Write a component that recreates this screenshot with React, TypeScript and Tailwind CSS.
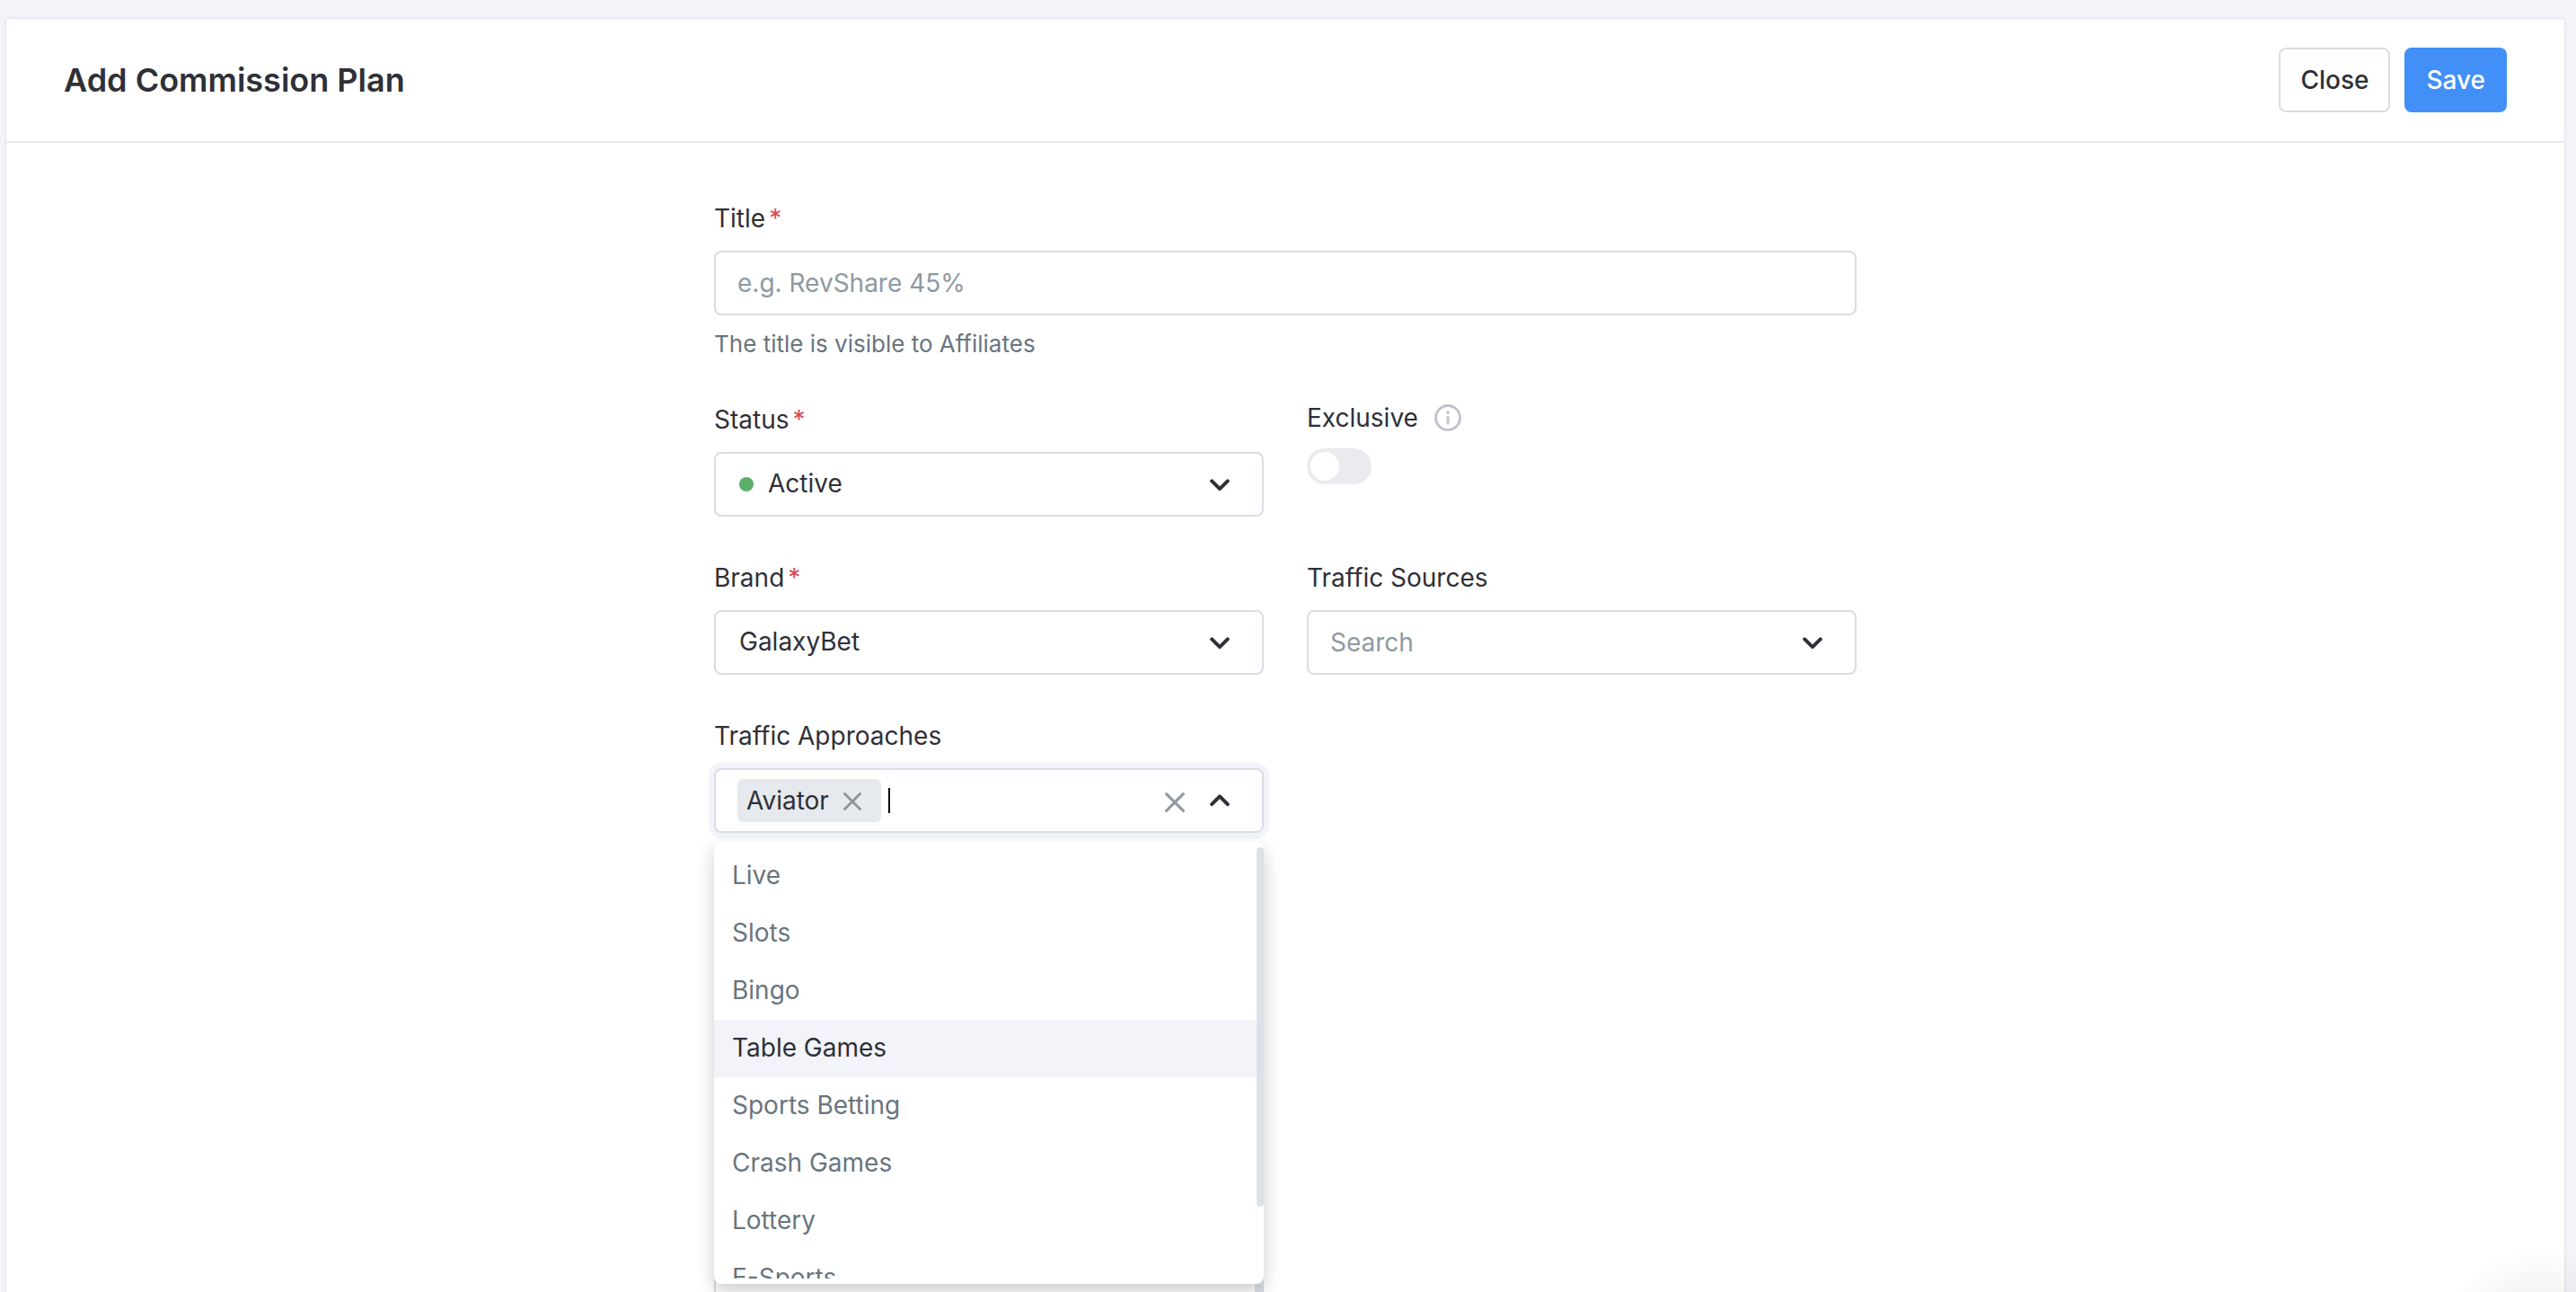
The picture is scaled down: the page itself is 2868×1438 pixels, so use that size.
import { useState, type ReactNode } from "react";

const trafficApproaches = [
  "Live",
  "Slots",
  "Bingo",
  "Table Games",
  "Sports Betting",
  "Crash Games",
  "Lottery",
  "E-Sports"
];

const controlClass = "h-[72px] w-full rounded-lg border-2 border-[#d8dce3] bg-white text-[28px]";

function Chevron({ up = false }: { up?: boolean }) {
  return (
    <svg viewBox="0 0 22 14" fill="none" stroke="#2f3037" strokeWidth="4" strokeLinecap="round" strokeLinejoin="round" className="block h-[14px] w-[22px]" aria-hidden="true">
      {up ? <path d="M2.2 11.2 11 2.4l8.8 8.8" /> : <path d="m2.2 2.4 8.8 8.8 8.8-8.8" />}
    </svg>
  );
}

function Cross({ className }: { className: string }) {
  return (
    <svg viewBox="0 0 22 22" fill="none" stroke="currentColor" strokeWidth="3" strokeLinecap="round" className={className} aria-hidden="true">
      <path d="M1.6 1.6l18.8 18.8M20.4 1.6 1.6 20.4" />
    </svg>
  );
}

function FieldLabel({ htmlFor, required = false, children }: { htmlFor: string; required?: boolean; children: ReactNode }) {
  return (
    <label htmlFor={htmlFor} className="mb-4 flex h-10 items-center gap-1 text-[28px] leading-10">
      {children}
      {required && <span className="text-[#d34f54]">*</span>}
    </label>
  );
}

type SelectFieldProps = {
  id: string;
  label: string;
  value: string;
  required?: boolean;
  placeholder?: boolean;
  dot?: boolean;
};

function SelectField({ id, label, value, required, placeholder = false, dot = false }: SelectFieldProps) {
  return (
    <div>
      <FieldLabel htmlFor={id} required={required}>
        {label}
      </FieldLabel>
      <div className="relative">
        <select
          id={id}
          className={`${controlClass} appearance-none pr-20 ${dot ? "pl-[58px]" : placeholder ? "pl-6" : "pl-[26px]"} ${placeholder ? "text-[#8e99a1]" : "pb-0.5 text-[#2f3037]"}`}
        >
          <option>{value}</option>
        </select>
        {dot && <span className="pointer-events-none absolute top-7 left-7 h-4 w-4 rounded-full bg-[#5bae6a]" />}
        <span className="pointer-events-none absolute top-[30px] right-[38px]">
          <Chevron />
        </span>
      </div>
    </div>
  );
}

function TrafficApproachesField() {
  const [active, setActive] = useState("Table Games");

  return (
    <div>
      <FieldLabel htmlFor="traffic-approaches">Traffic Approaches</FieldLabel>
      <div className="relative">
        <div className="flex h-[72px] items-center rounded-lg border-2 border-[#d8dce3] bg-white pr-9 pl-6 ring-6 ring-[#f3f4f9]">
          <span className="flex h-12 items-center rounded-md bg-[#e6e9ed] pr-[22px] pl-2.5 text-[28px]">
            Aviator
            <button type="button" aria-label="Remove Aviator" className="ml-4 pt-0.5 text-[#8e9297]">
              <Cross className="h-5 w-5" />
            </button>
          </span>
          <span className="ml-2 h-7 w-0.5 bg-black" />
          <input
            id="traffic-approaches"
            type="text"
            role="combobox"
            aria-expanded="true"
            aria-controls="traffic-approaches-list"
            className="h-12 min-w-0 flex-1 bg-transparent text-[28px] outline-none"
          />
          <button type="button" aria-label="Clear all" className="mr-7 pt-1 text-[#8e999f]">
            <Cross className="h-[22px] w-[22px]" />
          </button>
          <button type="button" aria-label="Close list">
            <Chevron up />
          </button>
        </div>

        <div className="absolute top-full left-0 z-10 mt-2.5 w-full rounded-lg bg-white py-1.5 shadow-[0_8px_20px_rgba(0,0,0,0.2)]">
          <div className="flex h-[480px] overflow-hidden">
            <ul id="traffic-approaches-list" role="listbox" className="min-w-0 flex-1">
              {trafficApproaches.map((name) => (
                <li
                  key={name}
                  role="option"
                  aria-selected={name === active}
                  onMouseEnter={() => setActive(name)}
                  className={`h-16 px-5 text-[28px] leading-[62px] ${name === active ? "bg-[#f3f4f9] text-[#2f3037]" : "text-[#69757e]"}`}
                >
                  {name}
                </li>
              ))}
            </ul>
            <div className="h-[400px] w-2 rounded-full bg-[#dce1e9]" />
          </div>
        </div>
      </div>
    </div>
  );
}

export default function App() {
  return (
    <div className="relative h-screen overflow-hidden bg-[#f3f4f9] pt-[21px] pr-[13px] pl-[7px] font-['Inter',sans-serif] text-[#2f3037]">
      <main className="min-h-full rounded-t-sm bg-white shadow-[0_0_3px_rgba(0,0,0,0.15)]">
        <header className="flex items-center justify-between border-b-2 border-[#e6e8ec] px-16 py-8">
          <h1 className="text-[36px] leading-10 font-semibold">Add Commission Plan</h1>
          <div className="flex gap-4">
            <button type="button" className="h-[72px] rounded-lg border-2 border-[#d8dce3] bg-white px-[22px] text-[28px] font-medium">
              Close
            </button>
            <button type="submit" form="commission-plan" className="h-[72px] rounded-lg bg-[#4290f7] px-6 text-[28px] font-medium text-white">
              Save
            </button>
          </div>
        </header>

        <form id="commission-plan" className="mx-auto grid max-w-[1272px] grid-cols-2 gap-12 pt-16">
          <div className="col-span-2">
            <FieldLabel htmlFor="title" required>
              Title
            </FieldLabel>
            <input id="title" type="text" placeholder="e.g. RevShare 45%" className={`${controlClass} px-6 placeholder:text-[#8e99a1]`} />
            <p className="mt-4 text-[26px] leading-8 text-[#69757e]">The title is visible to Affiliates</p>
          </div>

          <SelectField id="status" label="Status" value="Active" required dot />
          <div>
            <div className="mb-4 flex h-9 items-center gap-[18px] text-[28px]">
              <label htmlFor="exclusive">Exclusive</label>
              <svg viewBox="0 0 30 30" fill="none" stroke="#bfc3ca" className="h-[30px] w-[30px]" aria-hidden="true">
                <circle cx="15" cy="15" r="13.5" strokeWidth="2.8" />
                <path d="M15 14.5v6.5" strokeWidth="3" strokeLinecap="round" />
                <circle cx="15" cy="9" r="1.8" fill="#bfc3ca" stroke="none" />
              </svg>
            </div>
            <input
              id="exclusive"
              type="checkbox"
              role="switch"
              className="block h-10 w-[72px] appearance-none rounded-full bg-[#e9ebef] p-1 before:block before:h-8 before:w-8 before:rounded-full before:bg-white checked:bg-[#4290f7] checked:before:ml-8"
            />
          </div>

          <SelectField id="brand" label="Brand" value="GalaxyBet" required />
          <SelectField id="traffic-sources" label="Traffic Sources" value="Search" placeholder />

          <TrafficApproachesField />

          {/* scrollable panel, mostly under the open list */}
          <div className="col-start-1 flex h-[520px] justify-end rounded-lg border-2 border-[#d8dce3]">
            <div className="w-2 bg-[#dce1e9]" />
          </div>
        </form>
      </main>

      {/* glow of the help widget */}
      <div className="pointer-events-none absolute -right-[75px] -bottom-[180px] h-[230px] w-[230px] bg-[radial-gradient(circle_closest-side,rgba(0,0,0,0.1),transparent)]" />
    </div>
  );
}
